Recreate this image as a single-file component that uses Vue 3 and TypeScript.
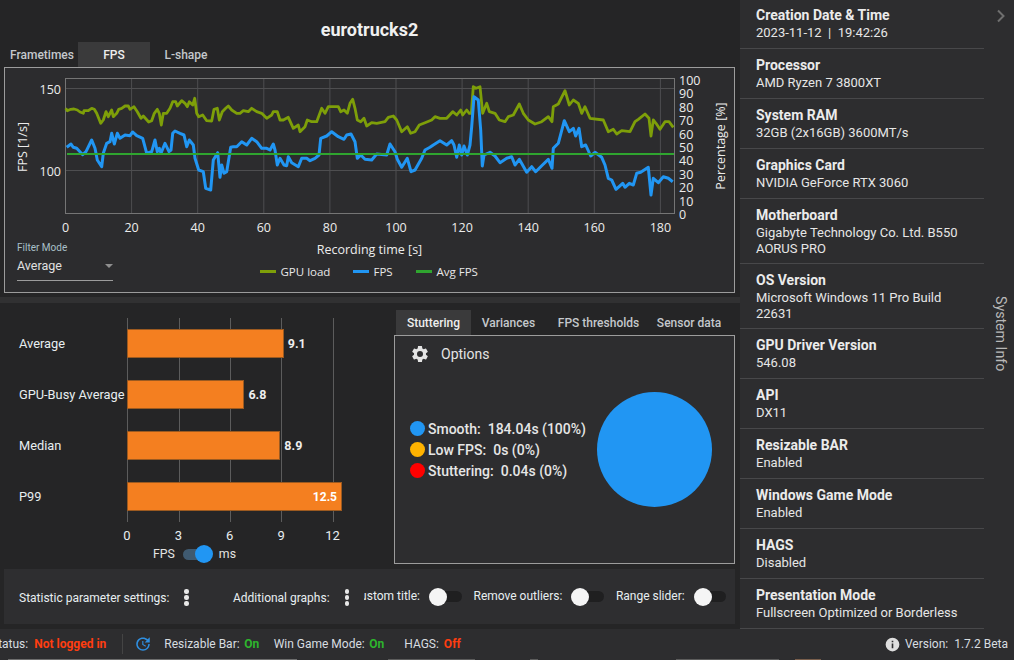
<script setup lang="ts">
type P = [number, number]
const conv = (ox: number, oy: number, pts: P[]) => pts.map(([x, y]) => [ox + x / 3, oy + y / 3] as P)
const str = (pts: P[]) => pts.map(([x, y]) => `${x.toFixed(1)},${y.toFixed(1)}`).join(' ')

const green = str([
  ...conv(60, 70, [[17,115],[22,122],[32,118],[42,117],[52,120],[60,126],[70,130],[72,122],[85,122],[95,115],[103,118],[110,130],[122,160],[130,150],[138,125],[145,140],[155,120],[160,140],[170,130],[176,118],[185,115],[195,108],[205,108],[210,118],[222,110],[232,125],[243,145],[250,138],[266,156],[275,152],[283,130],[292,118],[298,130],[304,165],[310,130],[320,130],[330,115],[338,95],[347,95],[352,108],[365,92],[375,100],[382,110],[388,95],[398,105],[404,85],[410,130],[416,140],[428,135],[440,152],[455,153],[462,118],[472,115],[478,150],[487,125],[497,115],[505,108],[515,120],[530,130],[540,130],[550,122],[565,125],[575,115],[590,125],[605,130],[620,145],[635,135]]),
  ...conv(270, 70, [[10,125],[22,125],[30,150],[40,150],[55,142],[70,175],[85,165],[90,185],[105,170],[112,150],[125,155],[140,155],[155,115],[165,130],[175,110],[190,110],[205,110],[212,125],[222,120],[232,130],[240,100],[248,88],[255,115],[262,150],[272,155],[282,145],[290,168],[305,158],[320,160],[345,155],[355,142],[370,138],[380,150],[395,185],[412,170],[422,190],[435,185],[448,165],[465,158],[485,150],[495,140],[510,145],[530,145],[548,125],[560,135],[572,120],[578,135],[590,120],[598,130],[604,130],[610,50],[618,55],[630,50],[638,130]]),
  ...conv(470, 70, [[50,100],[58,125],[75,130],[88,150],[105,155],[115,140],[130,135],[148,102],[160,130],[175,150],[195,162],[215,155],[235,140],[246,155],[250,110],[265,102],[285,62],[298,105],[310,90],[325,100],[335,130],[345,110],[360,145],[400,150],[415,185],[430,178],[440,192],[455,182],[480,185],[495,155],[505,148],[525,132],[537,145],[543,198],[550,150],[558,160],[570,178],[585,155],[597,155],[610,172]])
])
const blue = str([
  ...conv(60, 70, [[20,232],[33,222],[40,232],[50,235],[68,254],[78,245],[95,210],[105,235],[112,270],[125,290],[130,250],[140,220],[150,215],[155,190],[163,222],[172,190],[180,205],[195,195],[210,197],[218,186],[230,197],[248,205],[260,250],[275,245],[285,210],[292,245],[298,235],[303,250],[315,220],[327,245],[333,240],[338,190],[345,183],[360,190],[372,195],[380,230],[388,210],[400,225],[405,265],[416,300],[430,305],[437,355],[452,360],[460,270],[473,248],[480,322],[485,285],[492,310],[500,305],[512,232],[520,230],[530,230],[545,215],[560,225],[575,205],[590,215],[605,235],[620,235]]),
  ...conv(270, 70, [[0,240],[10,222],[15,240],[22,285],[30,265],[42,285],[50,287],[55,260],[65,278],[85,290],[95,265],[110,265],[120,272],[135,265],[147,255],[152,205],[170,198],[185,185],[205,200],[222,208],[230,195],[243,192],[255,215],[262,265],[272,255],[285,268],[305,270],[320,252],[350,255],[360,222],[375,245],[382,268],[395,292],[412,265],[423,305],[435,300],[455,265],[465,240],[480,232],[490,225],[510,212],[530,225],[545,212],[552,225],[560,262],[568,225],[575,255],[582,228],[592,255],[600,225],[605,170],[612,80],[625,90],[632,180],[637,288]]),
  ...conv(470, 70, [[42,255],[60,247],[75,258],[90,278],[110,265],[125,260],[135,285],[148,268],[170,307],[185,290],[197,305],[215,287],[235,268],[246,295],[250,235],[265,220],[283,152],[298,185],[310,175],[317,198],[327,175],[335,230],[347,225],[362,258],[375,247],[395,262],[405,285],[415,325],[425,330],[438,358],[458,340],[465,352],[478,340],[490,345],[500,310],[512,307],[535,292],[543,375],[550,325],[565,338],[580,320],[595,325],[608,335]])
])

const xOf = (t: number) => 65.5 + t * 3.305
const xTicks = [0, 20, 40, 60, 80, 100, 120, 140, 160, 180]
const pctTicks = [0, 10, 20, 30, 40, 50, 60, 70, 80, 90, 100]
const yOfPct = (p: number) => 214 - p * 1.34
const legend = [
  { x: 260, label: 'GPU load', color: '#7e9f09' },
  { x: 353, label: 'FPS', color: '#2196f3' },
  { x: 416, label: 'Avg FPS', color: '#2fa52f' }
]

const tabsTop = ['Frametimes', 'FPS', 'L-shape']
const tabsLower = ['Stuttering', 'Variances', 'FPS thresholds', 'Sensor data']

const unit = 17.12
const bars = [
  { label: 'Average', value: 9.1 },
  { label: 'GPU-Busy Average', value: 6.8 },
  { label: 'Median', value: 8.9 },
  { label: 'P99', value: 12.5 }
]
const barTicks = [0, 3, 6, 9, 12]

const stutter = [
  { color: '#2196f3', label: 'Smooth:', value: '184.04s (100%)' },
  { color: '#ffb300', label: 'Low FPS:', value: '0s (0%)' },
  { color: '#ff0000', label: 'Stuttering:', value: '0.04s (0%)' }
]

const info = [
  { t: 'Creation Date & Time', v: '2023-11-12  |  19:42:26' },
  { t: 'Processor', v: 'AMD Ryzen 7 3800XT' },
  { t: 'System RAM', v: '32GB (2x16GB) 3600MT/s' },
  { t: 'Graphics Card', v: 'NVIDIA GeForce RTX 3060' },
  { t: 'Motherboard', v: 'Gigabyte Technology Co. Ltd. B550 AORUS PRO' },
  { t: 'OS Version', v: 'Microsoft Windows 11 Pro Build 22631' },
  { t: 'GPU Driver Version', v: '546.08' },
  { t: 'API', v: 'DX11' },
  { t: 'Resizable BAR', v: 'Enabled' },
  { t: 'Windows Game Mode', v: 'Enabled' },
  { t: 'HAGS', v: 'Disabled' },
  { t: 'Presentation Mode', v: 'Fullscreen Optimized or Borderless' }
]
</script>

<template>
  <div class="app">
    <div class="top">
      <main class="main">
        <section class="upper">
          <h1 class="title">eurotrucks2</h1>
          <div class="tabs top-tabs">
            <div v-for="t in tabsTop" :key="t" class="tab" :class="{ active: t === 'FPS' }">{{ t }}</div>
          </div>
          <div class="chart-panel">
            <svg class="chart" width="729" height="224" viewBox="5 68 729 224">
              <g class="grid">
                <line v-for="t in xTicks.slice(1)" :key="t" :x1="xOf(t)" y1="79" :x2="xOf(t)" y2="213" />
                <line x1="65.5" y1="88.5" x2="674" y2="88.5" />
                <line x1="65.5" y1="170.5" x2="674" y2="170.5" />
              </g>
              <rect class="frame" x="65.5" y="78.5" width="609" height="135" />
              <polyline class="trace" :points="green" stroke="#7e9f09" stroke-width="2.8" />
              <polyline class="trace" :points="blue" stroke="#2196f3" stroke-width="3" />
              <line x1="67" y1="154" x2="674" y2="154" stroke="#2fa52f" stroke-width="2" />
              <text class="tick" x="61" y="94" text-anchor="end">150</text>
              <text class="tick" x="61" y="176" text-anchor="end">100</text>
              <text v-for="t in xTicks" :key="'x' + t" class="tick" :x="xOf(t)" y="232" text-anchor="middle">{{ t }}</text>
              <text v-for="p in pctTicks" :key="'p' + p" class="tick" x="679" :y="yOfPct(p) + 5">{{ p }}</text>
              <text class="tick" transform="translate(27 147) rotate(-90)" text-anchor="middle">FPS [1/s]</text>
              <text class="tick" transform="translate(725 146) rotate(-90)" text-anchor="middle">Percentage [%]</text>
              <text class="tick" x="369.5" y="254" text-anchor="middle">Recording time [s]</text>
              <g v-for="l in legend" :key="l.label">
                <line :x1="l.x" y1="271.5" :x2="l.x + 16" y2="271.5" :stroke="l.color" stroke-width="3" />
                <text class="legend" :x="l.x + 20.5" y="276">{{ l.label }}</text>
              </g>
            </svg>
            <div class="filter">
              <div class="filter-label">Filter Mode</div>
              <div class="filter-select">
                <span>Average</span>
                <i class="caret"></i>
              </div>
            </div>
          </div>
        </section>

        <div class="split"></div>

        <section class="lower">
          <div class="bar-area">
            <div class="bar-chart">
              <div class="gridlines">
                <i v-for="t in barTicks" :key="t" :style="{ left: t * unit + 'px' }"></i>
              </div>
              <div v-for="b in bars" :key="b.label" class="bar-row">
                <div class="bar-label">{{ b.label }}</div>
                <div class="bar-track">
                  <div class="bar" :style="{ width: b.value * unit + 1 + 'px' }">
                    <span v-if="b.value > 12" class="bar-val inside">{{ b.value }}</span>
                  </div>
                  <span v-if="b.value <= 12" class="bar-val">{{ b.value }}</span>
                </div>
              </div>
              <div class="bar-ticks">
                <span v-for="t in barTicks" :key="t" :style="{ left: t * unit + 'px' }">{{ t }}</span>
              </div>
            </div>
            <div class="unit-toggle">
              <span>FPS</span>
              <span class="switch on"><i></i></span>
              <span>ms</span>
            </div>
          </div>

          <div class="stats">
            <div class="tabs lower-tabs">
              <div v-for="t in tabsLower" :key="t" class="tab" :class="{ active: t === 'Stuttering' }">{{ t }}</div>
            </div>
            <div class="stats-panel">
              <div class="options">
                <svg width="20" height="20" viewBox="0 0 24 24" fill="#e4e4e4"><path d="M19.14 12.94c.04-.3.06-.61.06-.94s-.02-.64-.07-.94l2.03-1.58a.49.49 0 0 0 .12-.61l-1.92-3.32a.49.49 0 0 0-.59-.22l-2.39.96c-.5-.38-1.03-.7-1.62-.94l-.36-2.54a.48.48 0 0 0-.48-.41h-3.84c-.24 0-.43.17-.47.41l-.36 2.54c-.59.24-1.13.57-1.62.94l-2.39-.96a.48.48 0 0 0-.59.22L2.74 8.87a.47.47 0 0 0 .12.61l2.03 1.58c-.05.3-.09.63-.09.94s.02.64.07.94l-2.03 1.58a.49.49 0 0 0-.12.61l1.92 3.32c.12.22.37.29.59.22l2.39-.96c.5.38 1.03.7 1.62.94l.36 2.54c.05.24.24.41.48.41h3.84c.24 0 .44-.17.47-.41l.36-2.54c.59-.24 1.13-.56 1.62-.94l2.39.96c.22.08.47 0 .59-.22l1.92-3.32a.47.47 0 0 0-.12-.61l-2.01-1.58zM12 15.6A3.6 3.6 0 1 1 12 8.4a3.6 3.6 0 0 1 0 7.2z"/></svg>
                <span>Options</span>
              </div>
              <div class="stats-body">
                <div class="stutter-legend">
                  <div v-for="s in stutter" :key="s.label" class="stutter-row">
                    <i :style="{ background: s.color }"></i>
                    <span>{{ s.label }}</span>
                    <span class="stutter-val">{{ s.value }}</span>
                  </div>
                </div>
                <div class="pie"></div>
              </div>
            </div>
          </div>

          <div class="toolbar">
            <div class="tool first">
              <span>Statistic parameter settings:</span>
              <span class="dots"><i></i><i></i><i></i></span>
            </div>
            <div class="tool second">
              <span>Additional graphs:</span>
              <span class="dots"><i></i><i></i><i></i></span>
            </div>
            <div class="tool switch-tool">
              <span class="clip-text"><span>Custom title:</span></span>
              <span class="switch"><i></i></span>
            </div>
            <div class="tool switch-tool">
              <span>Remove outliers:</span>
              <span class="switch"><i></i></span>
            </div>
            <div class="tool switch-tool">
              <span>Range slider:</span>
              <span class="switch"><i></i></span>
            </div>
          </div>
        </section>
      </main>

      <aside class="side">
        <div class="info-list">
          <div v-for="i in info" :key="i.t" class="info-item">
            <div class="info-title">{{ i.t }}</div>
            <div class="info-value">{{ i.v }}</div>
          </div>
        </div>
        <div class="rail">
          <svg class="chev" width="10" height="14" viewBox="0 0 10 14"><path d="M2 1.5 7.5 7 2 12.5" fill="none" stroke="#6f6f6f" stroke-width="2" /></svg>
          <div class="rail-label">System Info</div>
        </div>
      </aside>
    </div>

    <footer class="status">
      <span class="s-clip">Status:</span>
      <span class="s-bad s-login">Not logged in</span>
      <i class="s-div"></i>
      <svg class="s-hist" width="18" height="18" viewBox="0 0 24 24" fill="#2f8fe0"><path d="M21 10.12h-6.78l2.74-2.82c-2.73-2.7-7.15-2.8-9.88-.1-2.73 2.71-2.73 7.08 0 9.79s7.15 2.71 9.88 0C18.32 15.65 19 14.08 19 12.1h2c0 1.98-.88 4.55-2.64 6.29-3.51 3.48-9.21 3.48-12.72 0-3.5-3.47-3.53-9.11-.02-12.58s9.14-3.47 12.65 0L21 3v7.12zM12.5 8v4.25l3.5 2.08-.72 1.21L11 13V8h1.5z"/></svg>
      <span>Resizable Bar:</span><span class="s-good">On</span>
      <span class="s-gap">Win Game Mode:</span><span class="s-good">On</span>
      <span class="s-gap2">HAGS:</span><span class="s-bad s-off">Off</span>
      <span class="s-right">
        <svg width="15" height="15" viewBox="0 0 24 24" fill="#dedede"><path d="M12 1a11 11 0 1 0 0 22 11 11 0 0 0 0-22zm1.3 17h-2.6v-7.5h2.6V18zm0-9.5h-2.6V6h2.6v2.5z"/></svg>
        <span>Version:&nbsp; 1.7.2 Beta</span>
      </span>
    </footer>
    <div class="under"></div>
  </div>
</template>

<style>
html, body { margin: 0; padding: 0; background: #252526; overflow: hidden; }
</style>

<style scoped>
.app {
  width: 1014px;
  height: 660px;
  display: flex;
  flex-direction: column;
  background: #252526;
  color: #e8e8e8;
  font-family: Roboto, sans-serif;
  font-size: 13px;
  overflow: hidden;
}
.top { display: flex; height: 629px; flex: none; }
.main { width: 740px; flex: none; display: flex; flex-direction: column; background: #252526; }
.upper { height: 297px; flex: none; padding: 0 5px 0 4px; box-sizing: border-box; display: flex; flex-direction: column; }
.title { margin: 0; height: 42px; box-sizing: border-box; padding-top: 19px; text-align: center; font-size: 18px; line-height: 22px; font-weight: 700; color: #f0f0f0; }
.tabs { display: flex; font-weight: 500; font-size: 12px; color: #c4c8cc; }
.tab { height: 25px; line-height: 26px; text-align: center; box-sizing: border-box; }
.tab.active { background: #3a3a3b; color: #eeeeee; }
.top-tabs { margin-left: -4px; }
.top-tabs .tab { width: 72px; }
.top-tabs .tab:first-child { width: 78px; padding-left: 6px; }
.chart-panel { position: relative; width: 731px; height: 226px; box-sizing: border-box; border: 1px solid #9c9c9c; background: #2c2c2e; }
.chart { display: block; }
.grid line { stroke: #4e4e50; stroke-width: 1; }
.frame { fill: none; stroke: #757575; stroke-width: 1; }
.trace { fill: none; stroke-linejoin: round; }
.tick { font-family: "Open Sans", sans-serif; font-size: 12.5px; fill: #ececec; }
.legend { font-family: "Open Sans", sans-serif; font-size: 11.5px; fill: #e8e8e8; }
.filter { position: absolute; left: 12px; top: 174px; width: 96px; }
.filter-label { font-size: 10px; line-height: 12px; color: #a9c0c9; }
.filter-select { margin-top: 3px; height: 24px; box-sizing: border-box; border-bottom: 1px solid #9c9c9c; display: flex; justify-content: space-between; align-items: flex-start; line-height: 18px; color: #e0e0e0; font-size: 12.5px; }
.caret { margin-top: 7px; width: 0; height: 0; border-left: 4px solid transparent; border-right: 4px solid transparent; border-top: 4px solid #8f8f8f; }
.split { height: 6px; flex: none; background: #313132; }
.lower { flex: 1; display: grid; grid-template-columns: 390px 350px; grid-template-rows: 1fr 60px; }
.bar-area { padding-top: 15px; position: relative; }
.bar-chart { position: relative; margin-left: 19px; width: 350px; height: 219px; }
.gridlines { position: absolute; left: 108.3px; top: 0; height: 204px; }
.gridlines i { position: absolute; top: 0; height: 204px; width: 1px; background: #5c5c5c; }
.bar-row { position: relative; height: 51px; display: flex; align-items: center; }
.bar-label { width: 108px; flex: none; white-space: nowrap; color: #e8eef0; font-size: 12.8px; }
.bar-track { display: flex; align-items: center; }
.bar { height: 29px; box-sizing: border-box; background: #f47f20; border: 1px solid #9c5a20; display: flex; align-items: center; justify-content: flex-end; }
.bar-val { margin-left: 4px; font-size: 12.5px; font-weight: 700; color: #eeeeee; }
.bar-val.inside { margin: 0 4px 0 0; color: #fff; font-size: 12px; }
.bar-ticks { position: absolute; left: 108px; top: 210px; }
.bar-ticks span { position: absolute; transform: translateX(-50%); font-size: 13px; color: #e8eef0; }
.unit-toggle { position: absolute; left: 153px; top: 242px; display: flex; align-items: center; gap: 8px; font-size: 12.3px; color: #e4e4e4; height: 18px; }
.switch { display: inline-block; position: relative; width: 29.5px; height: 11px; border-radius: 6px; background: #1f1f20; flex: none; }
.switch i { position: absolute; left: -3px; top: -3.5px; width: 18px; height: 18px; border-radius: 50%; background: #f5f5f5; }
.switch.on { background: #3f5a70; width: 28px; }
.switch.on i { left: 12.5px; background: #2196f3; }
.stats { padding: 7px 5px 0 4px; display: flex; flex-direction: column; }
.lower-tabs { margin-left: 2px; }
.lower-tabs .tab:nth-child(1) { width: 75px; }
.lower-tabs .tab:nth-child(2) { width: 75px; }
.lower-tabs .tab:nth-child(3) { width: 105px; }
.lower-tabs .tab:nth-child(4) { width: 76px; }
.stats-panel { height: 229px; width: 341px; box-sizing: border-box; border: 1px solid #9c9c9c; background: #2d2d2f; display: grid; }
.stats-panel > * { grid-area: 1 / 1; }
.options { display: flex; align-items: center; align-self: start; gap: 11px; padding: 8px 0 0 15px; font-size: 14px; color: #e4e4e4; height: 20px; }
.stats-body { display: flex; align-items: center; padding-left: 15px; }
.stutter-legend { display: flex; flex-direction: column; gap: 3px; width: 187px; flex: none; }
.stutter-row { height: 18px; display: flex; align-items: center; font-size: 14px; font-weight: 500; color: #e6e6e6; white-space: pre; }
.stutter-row i { width: 15px; height: 15px; border-radius: 50%; margin-right: 3px; flex: none; }
.stutter-val { margin-left: 7px; }
.pie { width: 115px; height: 115px; border-radius: 50%; background: #2196f3; }
.toolbar { grid-column: 1 / 3; margin: 0 5px 5px 4px; height: 55px; background: #2e2e30; display: flex; align-items: center; font-size: 12px; color: #e8eef0; }
.tool { display: flex; align-items: center; white-space: nowrap; flex: none; }
.first { margin-left: 15px; width: 214px; margin-top: 2px; }
.second { width: 131px; margin-top: 2px; }
.dots { display: flex; flex-direction: column; gap: 1.5px; margin-left: 15px; }
.dots i { width: 4.5px; height: 4.5px; border-radius: 50%; background: #e8e8e8; }
.switch-tool { margin-bottom: 2px; margin-right: 12px; }
.switch-tool:last-child { margin-right: 0; }
.switch-tool .switch { margin-left: 12px; margin-top: 2px; }
.clip-text { width: 56px; overflow: hidden; display: flex; justify-content: flex-end; flex: none; }
.clip-text span { flex: none; }
.side { flex: 1; display: flex; background: #2d2d2f; }
.info-list { width: 244px; flex: none; }
.info-item { box-sizing: border-box; min-height: 50px; border-bottom: 1px solid #48484a; padding: 8px 16px 6px; }
.info-item:first-child { padding-top: 7px; min-height: 49px; }
.info-title { font-size: 14px; line-height: 17px; font-weight: 700; color: #ebebeb; }
.info-value { margin-top: 1px; font-size: 13px; line-height: 16px; color: #e6e6e6; white-space: pre-wrap; }
.rail { flex: 1; display: flex; flex-direction: column; align-items: center; padding-left: 4px; }
.chev { margin-top: 9px; }
.rail-label { margin-top: 273px; writing-mode: vertical-rl; font-size: 14.2px; color: #b8b8b8; }
.status { height: 30px; flex: none; background: #2d2d2f; display: flex; align-items: center; font-size: 12px; color: #d8dde0; white-space: nowrap; }
.s-clip { margin-left: -9px; flex: none; }
.s-login { margin-left: 6px; }
.s-bad { color: #ff3d10; font-weight: 700; }
.s-good { color: #2db52d; font-weight: 700; margin-left: 4.5px; }
.s-div { width: 1px; height: 20px; background: #444; margin: 0 10.5px 0 16px; }
.s-hist { margin-right: 12.5px; }
.s-gap { margin-left: 14.5px; }
.s-gap2 { margin-left: 20px; }
.s-off { margin-left: 5px; }
.s-right { margin-left: auto; margin-right: 6px; display: flex; align-items: center; gap: 5px; }
.under {
  flex: 1;
  background:
    linear-gradient(90deg, transparent 8px, #6e6e6e 8px, #6e6e6e 297px, transparent 297px, transparent 388px, #5c5c5c 388px, #5c5c5c 475px, transparent 475px, transparent 530px, #5c5c5c 530px, #5c5c5c 538px, transparent 538px, transparent 676px, #5c5c5c 676px, #5c5c5c 779px, transparent 779px, transparent 795px, #7a5f4c 795px, #7a5f4c 821px, transparent 821px),
    #2d2d2f;
}
</style>
